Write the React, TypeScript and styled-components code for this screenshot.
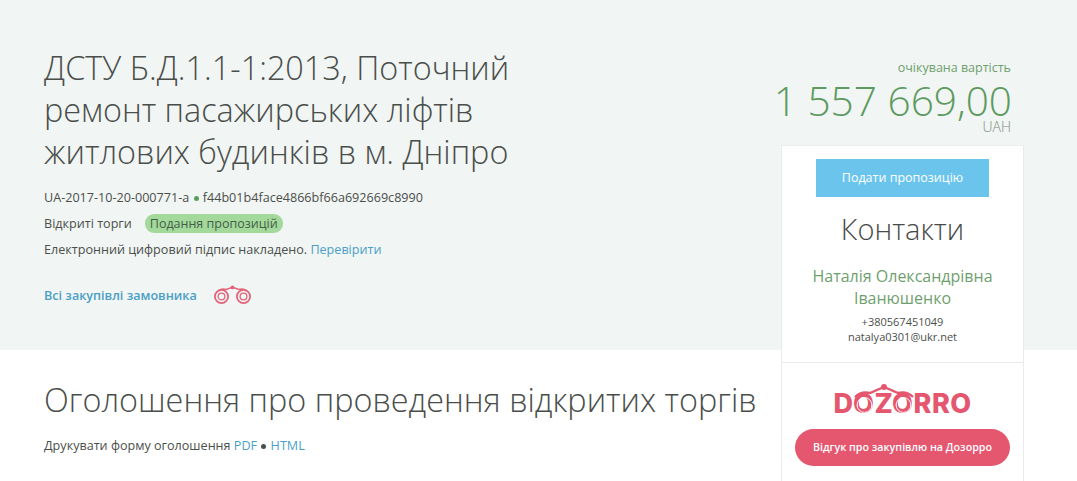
import React, { FC } from 'react';
import styled, { createGlobalStyle } from 'styled-components';

const GlobalStyle = createGlobalStyle`
  html, body { margin: 0; padding: 0; background: #fff; }
  body { font-family: "Open Sans", "Liberation Sans", sans-serif; color: #4b4f4c; }
`

const Binoculars: FC<{ className?: string }> = ({ className }) => (
  <svg className={className} viewBox="0 0 38 20" fill="none" stroke="#e2647a">
    <circle cx="7.5" cy="11.5" r="6.6" strokeWidth="1.8" />
    <circle cx="7.5" cy="11.5" r="3.4" strokeWidth="1.3" />
    <circle cx="29.5" cy="11.5" r="6.6" strokeWidth="1.8" />
    <circle cx="29.5" cy="11.5" r="3.4" strokeWidth="1.3" />
    <path d="M4 6 Q8 3 12 4.5 L18.5 2.4 L25 4.5 Q29 3 33 6" strokeWidth="1.5" />
    <circle cx="18.5" cy="2.4" r="1.9" fill="#e2647a" stroke="none" />
  </svg>
)

// arcs and inner rings that turn the two O of the logo into binoculars
const LogoBridge: FC<{ className?: string }> = ({ className }) => (
  <svg className={className} viewBox="0 0 138 34" fill="none">
    <circle cx="30.5" cy="22" r="7.4" stroke="#fff" strokeWidth="1" />
    <circle cx="69.5" cy="22" r="7.4" stroke="#fff" strokeWidth="1" />
    <path d="M21 14 Q27 8 36 10 L50 4 L64 10 Q73 8 79 14" stroke="#e5566f" strokeWidth="2.4" />
    <circle cx="50" cy="4" r="3" fill="#e5566f" />
  </svg>
)

export default function App() {
  return (
    <Page>
      <GlobalStyle />
      <Main>
        <Hero>
          <Title>ДСТУ Б.Д.1.1-1:2013, Поточний ремонт пасажирських ліфтів житлових будинків в м. Дніпро</Title>
          <Meta>UA-2017-10-20-000771-a <Dot /> f44b01b4face4866bf66a692669c8990</Meta>
          <Meta>
            Відкриті торги
            <Status>Подання пропозицій</Status>
          </Meta>
          <Meta>Електронний цифровий підпис накладено. <Link>Перевірити</Link></Meta>
          <Customer>
            <StrongLink>Всі закупівлі замовника</StrongLink>
            <CustomerIcon />
          </Customer>
        </Hero>
        <Notice>
          <Heading>Оголошення про проведення відкритих торгів</Heading>
          <Meta>Друкувати форму оголошення <Link>PDF</Link> <Dot $dark /> <Link>HTML</Link></Meta>
        </Notice>
      </Main>
      <Side>
        <Price>
          <PriceLabel>очікувана вартість</PriceLabel>
          <PriceValue>1 557 669,00</PriceValue>
          <Currency>UAH</Currency>
        </Price>
        <Card>
          <CardTop>
            <SubmitButton>Подати пропозицію</SubmitButton>
            <ContactsTitle>Контакти</ContactsTitle>
            <ContactName>Наталія Олександрівна Іванюшенко</ContactName>
            <ContactLine>+380567451049</ContactLine>
            <ContactLine>natalya0301@ukr.net</ContactLine>
          </CardTop>
          <CardBottom>
            <Logo>
              <LogoLetter $width={19}>D</LogoLetter>
              <LogoLetter $width={22}>O</LogoLetter>
              <LogoLetter $width={17}>Z</LogoLetter>
              <LogoLetter $width={22}>O</LogoLetter>
              <LogoTail>RRO</LogoTail>
              <LogoOverlay />
            </Logo>
            <ReviewButton>Відгук про закупівлю на Дозорро</ReviewButton>
          </CardBottom>
        </Card>
      </Side>
    </Page>
  )
}

//---------------------------STYLES-------------------------------------------//

const Page = styled.div`
  width: 1077px;
  height: 481px;
  overflow: hidden;
  display: flex;
  background: linear-gradient(#f1f5f3 350px, #fff 350px);
`

const Main = styled.div`
  width: 781px;
  padding-left: 44px;
  box-sizing: border-box;
`

const Hero = styled.div`
  height: 350px;
  padding-top: 46px;
  box-sizing: border-box;
`

const Title = styled.h1`
  width: 490px;
  margin: 0 0 13px;
  font-size: 32.4px;
  line-height: 42px;
  font-weight: 300;
  color: #4a4e4b;
`

const Meta = styled.div`
  height: 26px;
  font-size: 12.6px;
  line-height: 26px;
  color: #4b4f4c;
  white-space: nowrap;
`

const Dot = styled.span<{ $dark?: boolean }>`
  display: inline-block;
  width: 5px;
  height: 5px;
  margin: 0 1px;
  border-radius: 50%;
  vertical-align: 1px;
  background: ${props => props.$dark ? "#4b4f4c" : "#5c9e5c"};
`

const Status = styled.span`
  margin-left: 13px;
  padding: 1px 5px;
  border-radius: 9px;
  background: #a3d99a;
  color: #44604a;
  font-size: 12.5px;
`

const Link = styled.a`
  color: #4a9fc8;
`

const Customer = styled.div`
  margin-top: 22px;
  display: flex;
  align-items: center;
  gap: 17px;
`

const StrongLink = styled.a`
  font-size: 12.6px;
  font-weight: 600;
  color: #4a9fc8;
`

const CustomerIcon = styled(Binoculars)`
  width: 38px;
  height: 20px;
`

const Notice = styled.div`
  padding-top: 27px;
`

const Heading = styled.h2`
  margin: 0 0 12px;
  font-size: 32.4px;
  line-height: 44px;
  font-weight: 300;
  color: #4a4e4b;
  white-space: nowrap;
`

const Side = styled.div`
  width: 243px;
  display: flex;
  flex-direction: column;
`

const Price = styled.div`
  height: 145px;
  padding: 59px 13px 0 0;
  box-sizing: border-box;
  text-align: right;
  white-space: nowrap;
`

const PriceLabel = styled.div`
  font-size: 12.5px;
  line-height: 18px;
  color: #6f9f6f;
`

const PriceValue = styled.div`
  font-size: 40.6px;
  line-height: 48px;
  font-weight: 300;
  color: #5c9a5f;
  margin: 0 -1px 0 -40px;
`

const Currency = styled.div`
  font-size: 14px;
  line-height: 14px;
  font-weight: 300;
  color: #7d8a80;
  margin-top: -5px;
`

const Card = styled.div`
  flex: 1;
  background: #fff;
  border: 1px solid #e9eceb;
  border-bottom: none;
  box-sizing: border-box;
`

const CardTop = styled.div`
  height: 217px;
  padding-top: 13px;
  box-sizing: border-box;
  text-align: center;
  border-bottom: 1px solid #e9eceb;
`

const SubmitButton = styled.div`
  width: 173px;
  height: 38px;
  margin: 0 auto;
  background: #6bc4ec;
  color: #fff;
  font-size: 12.5px;
  line-height: 38px;
`

const ContactsTitle = styled.div`
  margin-top: 12px;
  font-size: 29px;
  line-height: 40px;
  font-weight: 300;
  color: #474b48;
`

const ContactName = styled.div`
  margin: 16px auto 5px;
  width: 210px;
  font-size: 16px;
  line-height: 22px;
  color: #6f9f6f;
`

const ContactLine = styled.div`
  font-size: 11px;
  line-height: 15px;
  color: #4b4f4c;
`

const CardBottom = styled.div`
  padding-top: 20px;
  text-align: center;
`

const Logo = styled.div`
  position: relative;
  width: 138px;
  height: 34px;
  margin: 0 auto 12px;
  padding-top: 6px;
  box-sizing: border-box;
  font-family: "Inter", "Liberation Sans", sans-serif;
  font-size: 27px;
  line-height: 30px;
  font-weight: 800;
  color: #e5566f;
  text-align: left;
  white-space: nowrap;
`

const LogoLetter = styled.span<{ $width: number }>`
  display: inline-block;
  width: ${props => props.$width}px;
  text-align: center;
`

const LogoTail = styled.span`
  letter-spacing: 0.5px;
`

const LogoOverlay = styled(LogoBridge)`
  position: absolute;
  left: 0;
  top: 0;
  width: 138px;
  height: 34px;
`

const ReviewButton = styled.div`
  width: 215px;
  height: 37px;
  margin: 0 auto;
  border-radius: 19px;
  background: #e5566f;
  color: #fff;
  font-size: 10.7px;
  line-height: 37px;
  font-weight: 600;
  white-space: nowrap;
`
